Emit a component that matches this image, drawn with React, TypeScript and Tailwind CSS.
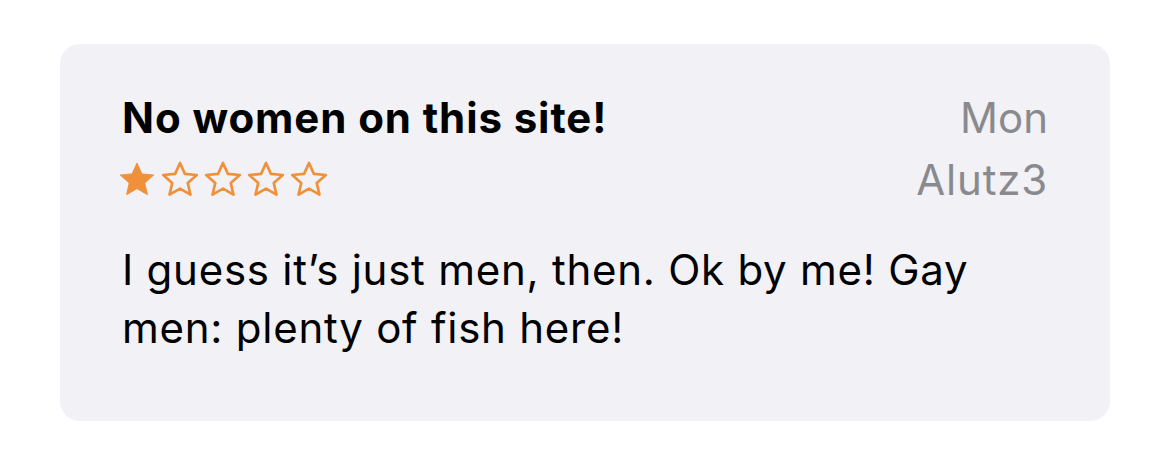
import React from "react";

const Star = ({ filled }: { filled: boolean }) => (
  <svg width="38" height="35" viewBox="0 0 24 22" className="shrink-0">
    <path
      d="M12 1.2l3.1 6.9 7.5.7-5.7 5 1.7 7.4L12 17.4l-6.6 3.8 1.7-7.4-5.7-5 7.5-.7z"
      fill={filled ? "#f0903a" : "none"}
      stroke="#f0903a"
      strokeWidth={filled ? 0.6 : 1.7}
      strokeLinejoin="round"
    />
  </svg>
);

export default function App() {
  return (
    <div
      className="w-[1170px] h-[458px] bg-white pt-[44px] pl-[60px]"
      style={{ fontFamily: "Inter, 'Liberation Sans', sans-serif" }}
    >
      <div className="w-[1050px] h-[377px] rounded-[20px] bg-[#f1f1f6] pl-[62px] pr-[63px] pt-[43px]">
        <div className="flex justify-between">
          <div className="flex flex-col">
            <div className="text-[42px] leading-[62px] font-bold text-black tracking-[0.9px]">
              No women on this site!
            </div>
            <div className="flex gap-[5px] mt-[12px] -ml-[4px]">
              <Star filled />
              <Star filled={false} />
              <Star filled={false} />
              <Star filled={false} />
              <Star filled={false} />
            </div>
          </div>
          <div className="flex flex-col items-end text-[42px] leading-[62px] text-[#8a8a8e] -mr-[1px]">
            <div className="tracking-[0px]">Mon</div>
            <div className="tracking-[0.8px]">Alutz3</div>
          </div>
        </div>
        <p className="mt-[30px] text-[42px] leading-[58px] text-black tracking-[0.75px]">
          I guess it’s just men, then. Ok by me! Gay
          <br />
          men: plenty of fish here!
        </p>
      </div>
    </div>
  );
}
